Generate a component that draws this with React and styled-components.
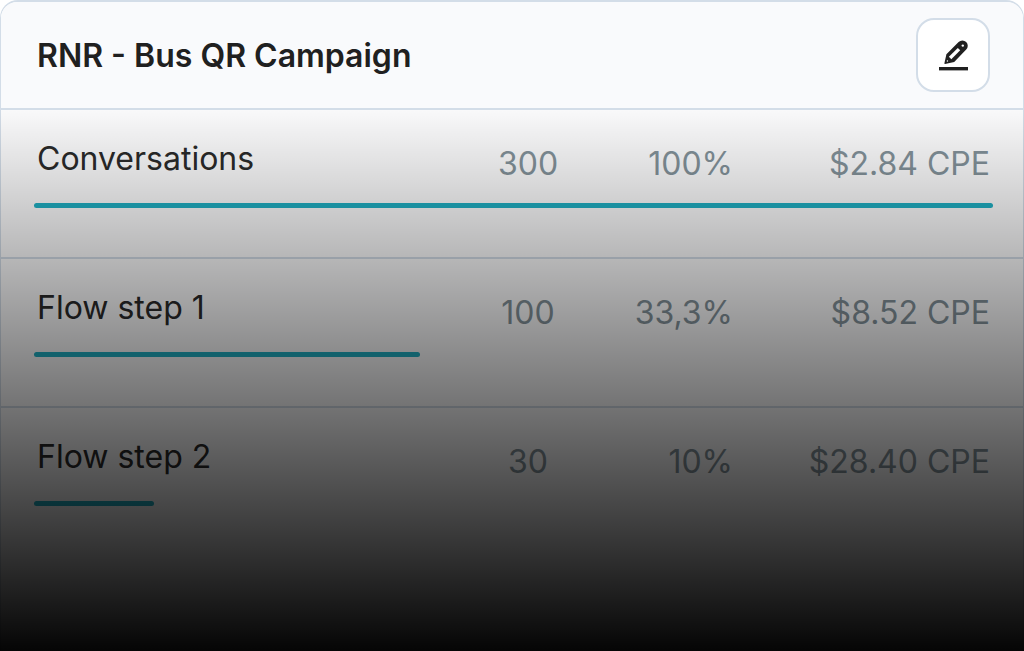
import styled, { createGlobalStyle } from "styled-components";

const steps = [
  { name: "Conversations", count: "300", rate: "100%", cost: "$2.84 CPE", bar: 100 },
  { name: "Flow step 1", count: "100", rate: "33,3%", cost: "$8.52 CPE", bar: 40.2 },
  { name: "Flow step 2", count: "30", rate: "10%", cost: "$28.40 CPE", bar: 12.5 },
];

export default function App() {
  return (
    <>
      <GlobalStyle />
      <Card>
        <Header>
          <Title>RNR - Bus QR Campaign</Title>
          <EditButton type="button" aria-label="Edit campaign">
            <PencilIcon />
          </EditButton>
        </Header>
        <Body>
          <StepTable>
            {steps.map((step) => (
              <StepItem key={step.name} step={step} />
            ))}
          </StepTable>
        </Body>
      </Card>
    </>
  );
}

function StepItem({ step }) {
  return (
    <StepGroup>
      <tr>
        <NameCell scope="row">{step.name}</NameCell>
        <CountCell>{step.count}</CountCell>
        <RateCell>{step.rate}</RateCell>
        <CostCell>{step.cost}</CostCell>
      </tr>
      <tr>
        <BarCell colSpan={4}>
          <Bar style={{ width: `${step.bar}%` }} />
        </BarCell>
      </tr>
    </StepGroup>
  );
}

function PencilIcon() {
  return (
    <svg width="30" height="32" viewBox="0 0 30 32" fill="none">
      <path d="M1 29.7h29" stroke="#202020" strokeWidth="3.4" />
      <path
        d="M8.4 15.2 20.6 3a5.3 5.3 0 0 1 7.6 7.6L16.2 23 7 25Q6.2 25 6.4 24.3Z"
        fill="#202020"
      />
      <path d="M12.1 19 21 10.1" stroke="#fff" strokeWidth="3.4" />
      <circle cx="24.8" cy="6.6" r="1.2" fill="#fff" />
      <circle cx="9.4" cy="22" r="0.7" fill="#fff" />
    </svg>
  );
}

const GlobalStyle = createGlobalStyle`
  * {
    box-sizing: border-box;
  }
  body {
    margin: 0;
    background: #fff;
    font-family: Inter, "Liberation Sans", sans-serif;
    overflow: hidden;
  }
`;
const Card = styled.section`
  display: flex;
  flex-direction: column;
  min-height: 100vh;
  border: 1px solid #d3dde8;
  border-top-width: 2px;
  border-bottom: 0;
  border-radius: 18px 18px 0 0;
`;
const Header = styled.header`
  display: flex;
  align-items: center;
  justify-content: space-between;
  padding: 16px 33px 16px 36px;
  border-bottom: 2px solid #d3dde8;
  border-radius: 16px 16px 0 0;
  background: #f9fafc;
`;
const Title = styled.h1`
  margin: 0;
  padding-top: 2px;
  font-size: 32px;
  font-weight: 600;
  line-height: 40px;
  color: #202020;
`;
const EditButton = styled.button`
  display: flex;
  align-items: center;
  justify-content: center;
  width: 74px;
  height: 74px;
  padding: 0;
  border: 2px solid #d3dde8;
  border-radius: 18px;
  background: #fff;
  cursor: pointer;
`;
const Body = styled.div`
  position: relative;
  flex: 1;
  background: #fcfcfd;

  /* fade the steps out, side borders included */
  &::after {
    content: "";
    position: absolute;
    inset: 0 -1px;
    background: linear-gradient(rgba(0, 0, 0, 0.01), rgba(0, 0, 0, 0.98));
    pointer-events: none;
  }
`;
const StepTable = styled.table`
  width: 100%;
  table-layout: fixed;
  border-spacing: 0;
  font-size: 32px;
  line-height: 40px;
`;
const StepGroup = styled.tbody`
  &:last-child td {
    border-bottom: 0;
  }
`;
const NameCell = styled.th`
  height: 93px;
  padding: 29px 0 0 36px;
  font-weight: 400;
  text-align: left;
  vertical-align: top;
  color: #2a2a2a;
`;
const ValueCell = styled.td`
  padding: 34px 0 0;
  vertical-align: top;
  color: #83929a;
`;
const CountCell = styled(ValueCell)`
  width: 144px;
  text-align: center;
`;
const RateCell = styled(ValueCell)`
  width: 133px;
  text-align: right;
`;
const CostCell = styled(ValueCell)`
  width: 290px;
  padding-right: 33px;
  text-align: right;
`;
const BarCell = styled.td`
  padding: 0 30px 49px 33px;
  border-bottom: 2px solid #d3dde8;
`;
const Bar = styled.div`
  height: 5px;
  border-radius: 3px;
  background: #20b0c4;
`;
